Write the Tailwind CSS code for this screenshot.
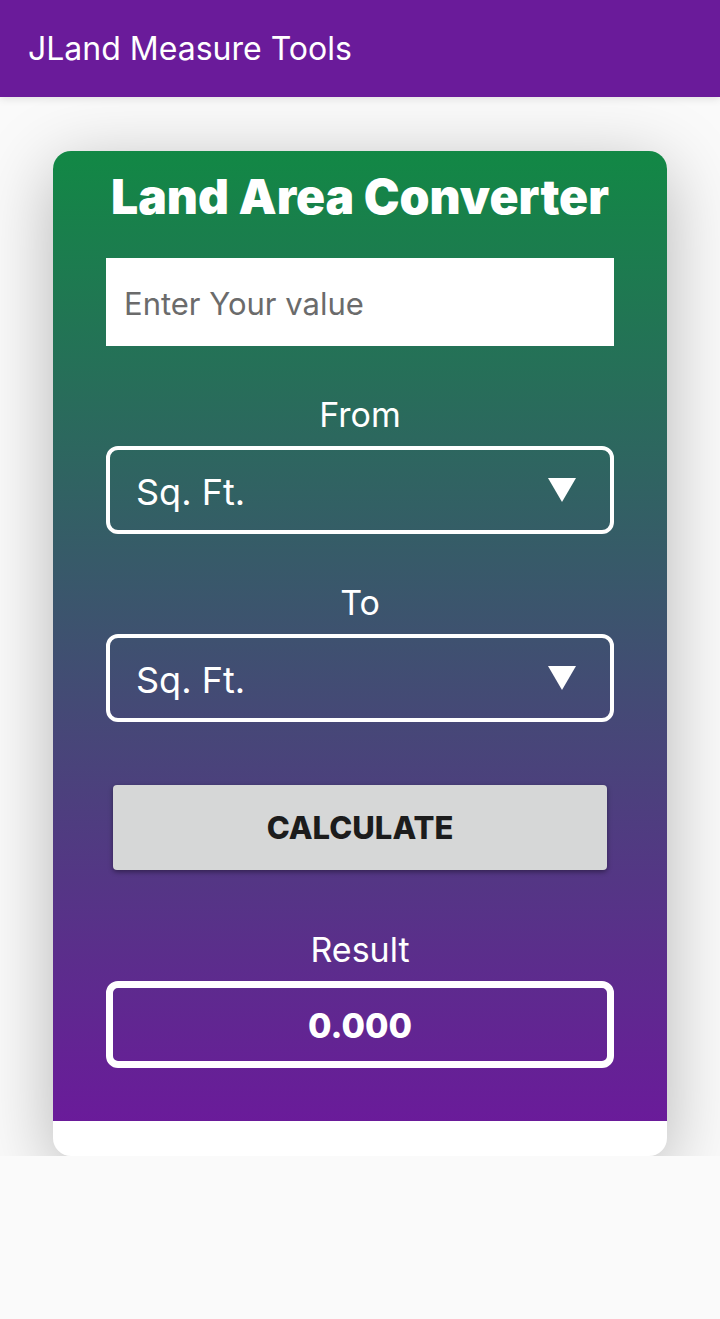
<!DOCTYPE html>
<html lang="en">
<head>
  <meta charset="utf-8">
  <meta name="viewport" content="width=device-width, initial-scale=1">
  <title>JLand Measure Tools</title>
  <script src="https://cdn.jsdelivr.net/npm/@tailwindcss/browser@4"></script>
</head>
<body class="min-h-screen bg-[#fafafa] font-['Inter',sans-serif] text-white">
  <header class="relative z-10 flex h-[97px] items-center bg-[#6a1b9a] px-7 shadow-[0_2px_8px_rgba(0,0,0,0.1)]">
    <h1 class="text-[32px] leading-10">JLand Measure Tools</h1>
  </header>

  <!-- clips the card shadow at the bottom edge -->
  <main class="overflow-hidden px-[53px] pt-[54px]">
    <div class="overflow-hidden rounded-[18px] bg-white pb-[35px] shadow-[0_16px_72px_rgba(0,0,0,0.28)]">
      <form class="flex flex-col bg-linear-to-b/srgb from-[#128845] to-[#6a1b9a] px-[53px] pb-[53px]">
        <h2 class="mb-4 text-center text-[48px] font-black leading-[91px] whitespace-nowrap">Land Area Converter</h2>
        <input type="text" inputmode="decimal" aria-label="Enter Your value" placeholder="Enter Your value" class="h-[88px] w-full bg-white px-[18px] pt-0.5 text-[31px] text-neutral-900 placeholder:text-[#6b6b6b]">

        <label for="from" class="mt-[53px] mb-[15px] text-center text-[34px] leading-8">From</label>
        <div class="relative">
          <select id="from" class="h-[88px] w-full appearance-none rounded-xl border-4 border-white bg-transparent px-[26px] pt-1 text-[36px]">
            <option>Sq. Ft.</option>
          </select>
          <svg class="pointer-events-none absolute top-8 right-[38px] h-6 w-7" viewBox="0 0 28 24" fill="currentColor" aria-hidden="true"><path d="M0 0h28L14 24z"/></svg>
        </div>

        <label for="to" class="mt-[53px] mb-[15px] text-center text-[34px] leading-8">To</label>
        <div class="relative">
          <select id="to" class="h-[88px] w-full appearance-none rounded-xl border-4 border-white bg-transparent px-[26px] pt-1 text-[36px]">
            <option>Sq. Ft.</option>
          </select>
          <svg class="pointer-events-none absolute top-8 right-[38px] h-6 w-7" viewBox="0 0 28 24" fill="currentColor" aria-hidden="true"><path d="M0 0h28L14 24z"/></svg>
        </div>

        <button type="button" class="mx-[7px] mt-[63px] h-[85px] rounded bg-[#d6d7d7] pt-0.5 text-[31px] font-extrabold text-[#1c1c1c] shadow-[0_2px_5px_rgba(0,0,0,0.4)]">CALCULATE</button>

        <label for="result" class="mt-16 mb-[15px] text-center text-[34px] leading-8">Result</label>
        <output id="result" class="flex h-[87px] items-center justify-center rounded-xl border-[7px] border-white pt-0.5 text-[34px] font-extrabold">0.000</output>
      </form>
    </div>
  </main>
</body>
</html>
